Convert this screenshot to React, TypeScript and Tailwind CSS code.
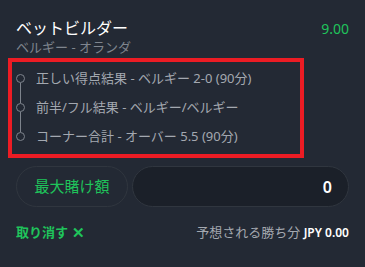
const legs = [
  '正しい得点結果 - ベルギー 2-0 (90分)',
  '前半/フル結果 - ベルギー/ベルギー',
  'コーナー合計 - オーバー 5.5 (90分)',
];

function LegDot({ first, last }: { first: boolean; last: boolean }) {
  return (
    <div className="relative w-[9px] h-[29px] flex items-center justify-center">
      {!first && <div className="absolute left-[4px] top-0 h-[10px] w-px bg-[#7d838c]" />}
      {!last && <div className="absolute left-[4px] bottom-0 h-[10px] w-px bg-[#7d838c]" />}
      <div className="w-[9px] h-[9px] rounded-full border-[1.5px] border-[#7d838c]" />
    </div>
  );
}

export default function App() {
  return (
    <div
      className="w-[365px] h-[267px] bg-[#232934] text-white px-4 pt-[17px]"
      style={{ fontFamily: '"Noto Sans", "Noto Sans CJK JP", sans-serif' }}
    >
      <div className="flex justify-between items-center h-[22px]">
        <span className="text-[16px] leading-[22px]">ベットビルダー</span>
        <span className="text-[14px] text-[#1fc45b]">9.00</span>
      </div>
      <div className="text-[13px] leading-[16px] text-[#7f858e]">ベルギー - オランダ</div>

      <div className="mt-[3px] -mx-2 w-[296px] h-[100px] border-4 border-[#ec1c24] px-1 pt-[2px]">
        <div className="flex flex-col">
          {legs.map((leg, i) => (
            <div key={leg} className="flex items-center gap-[11px]">
              <LegDot first={i === 0} last={i === legs.length - 1} />
              <span className="text-[13px] text-[#a3a8b0]">{leg}</span>
            </div>
          ))}
        </div>
      </div>

      <div className="flex gap-1 mt-2">
        <button className="w-[112px] h-[41px] rounded-full border border-[#30363f] text-[15px] text-[#1fc45b]">
          最大賭け額
        </button>
        <div className="flex-1 h-[41px] rounded-full border border-[#30363f] bg-[#1b2029] flex items-center justify-end px-4">
          <span className="text-[16px] font-semibold">0</span>
        </div>
      </div>

      <div className="flex justify-between items-center mt-[16px]">
        <span className="text-[13px] text-[#1fc45b] font-semibold flex items-center gap-1">
          取り消す <span className="text-[15px] font-black leading-none">✕</span>
        </span>
        <span className="text-[13px] text-[#a3a8b0]">
          予想される勝ち分 <span className="text-[12px] font-semibold text-white">JPY 0.00</span>
        </span>
      </div>
    </div>
  );
}
